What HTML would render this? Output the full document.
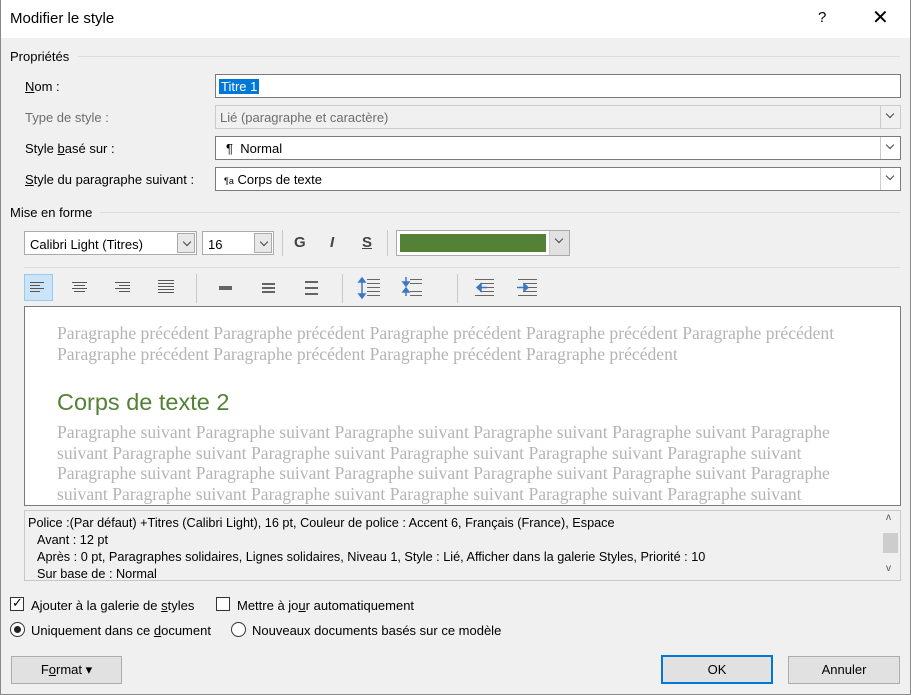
<!DOCTYPE html>
<html><head><meta charset="utf-8"><style>
*{box-sizing:border-box;margin:0;padding:0}
body{width:911px;height:695px;background:#f0f0f0;font-family:"Liberation Sans",sans-serif;font-size:13px;color:#000;position:relative;overflow:hidden}
.a{position:absolute;white-space:nowrap}
.box{position:absolute;background:#fff;border:1px solid #7a7a7a}
.dd{position:absolute;top:0;right:0;width:20px;height:100%;background:#fff;border-left:1px solid #ccc}
.dd:after{content:"";position:absolute;left:6px;top:5px;width:5px;height:5px;border-right:1px solid #444;border-bottom:1px solid #444;transform:rotate(45deg)}
.sep{position:absolute;height:1px;background:#dcdcdc}
.vs{position:absolute;width:1px;background:#c8c8c8}
.btn{position:absolute;background:#e1e1e1;border:1px solid #adadad;text-align:center;line-height:26px;font-size:13px}
.pv{font-family:"Liberation Serif",serif;font-size:17.6px;color:#b4b4b4;line-height:20.5px;white-space:nowrap}
u{text-decoration:underline}
.ic{position:absolute}
</style></head><body>
<div class="a" style="left:0;top:0;width:911px;height:38px;background:#fff"></div>
<div class="a" style="left:10px;top:10px;font-size:15px">Modifier le style</div>
<div class="a" style="left:818px;top:9px;font-size:15px">?</div>
<div class="a" style="left:872px;top:5px;font-size:20px;font-weight:300">✕</div>
<div class="a" style="left:0;top:0;width:1px;height:695px;background:#888"></div>
<div class="a" style="left:910px;top:0;width:1px;height:695px;background:#888"></div>
<div class="a" style="left:0;top:694px;width:911px;height:1px;background:#888"></div>

<div class="a" style="left:10px;top:49px">Propriétés</div>
<div class="sep" style="left:78px;top:56px;width:822px"></div>
<div class="a" style="left:25px;top:79px"><u>N</u>om :</div>
<div class="box" style="left:215px;top:74px;width:686px;height:24px"><span style="position:absolute;left:3px;top:4px;background:#0078d7;color:#fff;padding:0 2px">Titre 1</span></div>
<div class="a" style="left:25px;top:110px;color:#6d6d6d">Type de style :</div>
<div class="box" style="left:215px;top:105px;width:686px;height:24px;background:#f0f0f0;border-color:#ccc;color:#6d6d6d"><span style="position:absolute;left:4px;top:4px">Lié (paragraphe et caractère)</span><div class="dd" style="background:#f0f0f0"></div></div>
<div class="a" style="left:25px;top:141px">Style <u>b</u>asé sur :</div>
<div class="box" style="left:215px;top:136px;width:686px;height:24px"><span style="position:absolute;left:10px;top:4px">¶ &nbsp;Normal</span><div class="dd"></div></div>
<div class="a" style="left:25px;top:172px"><u>S</u>tyle du paragraphe suivant :</div>
<div class="box" style="left:215px;top:167px;width:686px;height:24px"><span style="position:absolute;left:8px;top:4px"><span style="font-size:9px">¶a</span> Corps de texte</span><div class="dd"></div></div>

<div class="a" style="left:10px;top:205px">Mise en forme</div>
<div class="sep" style="left:100px;top:212px;width:800px"></div>
<div class="box" style="left:24px;top:231px;width:173px;height:24px;border-color:#aaa"><span style="position:absolute;left:5px;top:5px">Calibri Light (Titres)</span><div class="dd" style="background:#e8e8e8;width:18px;top:1px;right:1px;height:20px;border:1px solid #aaa"></div></div>
<div class="box" style="left:202px;top:231px;width:72px;height:24px;border-color:#aaa"><span style="position:absolute;left:5px;top:5px">16</span><div class="dd" style="background:#e8e8e8;width:18px;top:1px;right:1px;height:20px;border:1px solid #aaa"></div></div>
<div class="vs" style="left:282px;top:230px;height:26px"></div>
<div class="a" style="left:294px;top:234px;font-weight:bold;font-size:15px;color:#444">G</div>
<div class="a" style="left:330px;top:234px;font-weight:bold;font-style:italic;font-size:15px;color:#444">I</div>
<div class="a" style="left:362px;top:234px;font-weight:bold;font-size:15px;color:#444;text-decoration:underline">S</div>
<div class="vs" style="left:387px;top:230px;height:26px"></div>
<div class="box" style="left:396px;top:230px;width:174px;height:26px;border-color:#aaa"><div style="position:absolute;left:3px;top:3px;width:146px;height:18px;background:#538135"></div><div class="dd" style="background:#e1e1e1;width:20px"></div></div>
<div class="sep" style="left:24px;top:267px;width:876px"></div>

<div class="a" style="left:24px;top:274px;width:29px;height:27px;background:#cce4f7;border:1px solid #99c9ef"></div>
<svg class="ic" style="left:0;top:270px" width="560" height="36">
<g stroke="#555" stroke-width="1">
<path d="M30 12.5h14M30 15.5h10M30 18.5h14M30 21.5h10"/>
<path d="M72 12.5h15M74 15.5h11M72 18.5h15M74 21.5h11"/>
<path d="M115 12.5h15M119 15.5h11M115 18.5h15M119 21.5h11"/>
<path d="M158 10.5h16M158 13.5h16M158 16.5h16M158 19.5h16M158 22.5h16"/>
</g>
<g stroke="#111" stroke-width="1.2">
<path d="M219 17h13M219 19h13"/>
<path d="M262 14h13M262 18h13M262 22h13"/>
<path d="M305 12h13M305 18h13M305 24h13"/>
</g>
<path d="M196.5 4v29M342.5 4v29M457.5 4v29" stroke="#c8c8c8"/>
<g stroke="#666"><path d="M367 9.5h13M367 13.5h13M367 17.5h13M367 21.5h13M367 25.5h13"/>
<path d="M410 9.5h12M410 13.5h12M410 21.5h12M410 25.5h12"/>
<path d="M475 9.5h19M480 13.5h14M480 17.5h14M480 21.5h14M475 25.5h19"/>
<path d="M518 9.5h19M523 13.5h14M523 17.5h14M523 21.5h14M518 25.5h19"/></g>
<g fill="#3b78c3" stroke="#3b78c3" stroke-width="1.5">
<path d="M362 10v16" fill="none"/><path d="M359 12l3-4 3 4zM359 24l3 4 3-4z"/>
<path d="M406 7v7M406 19v7" fill="none"/><path d="M403 12l3 4 3-4zM403 22l3-4 3 4z"/>
<path d="M478 17.5h9" fill="none"/><path d="M481 14l-4 3.5 4 3.5z"/>
<path d="M517 17.5h9" fill="none"/><path d="M524 14l4 3.5-4 3.5z"/>
</g>
</svg>

<div class="box" style="left:24px;top:306px;width:877px;height:200px;overflow:hidden">
<div class="pv" style="position:absolute;left:32px;top:16px">Paragraphe précédent Paragraphe précédent Paragraphe précédent Paragraphe précédent Paragraphe précédent<br>Paragraphe précédent Paragraphe précédent Paragraphe précédent Paragraphe précédent</div>
<div style="position:absolute;left:32px;top:82px;font-size:23.5px;color:#538135;font-family:'Liberation Sans',sans-serif">Corps de texte 2</div>
<div class="pv" style="position:absolute;left:32px;top:115px">Paragraphe suivant Paragraphe suivant Paragraphe suivant Paragraphe suivant Paragraphe suivant Paragraphe<br>suivant Paragraphe suivant Paragraphe suivant Paragraphe suivant Paragraphe suivant Paragraphe suivant<br>Paragraphe suivant Paragraphe suivant Paragraphe suivant Paragraphe suivant Paragraphe suivant Paragraphe<br>suivant Paragraphe suivant Paragraphe suivant Paragraphe suivant Paragraphe suivant Paragraphe suivant</div>
</div>

<div class="box" style="left:24px;top:510px;width:877px;height:71px;background:#f0f0f0;border-color:#c8c8c8;font-size:12.7px">
<div style="position:absolute;left:3px;top:4px;line-height:17px;white-space:nowrap">Police :(Par défaut) +Titres (Calibri Light), 16 pt, Couleur de police : Accent 6, Français (France), Espace<br><span style="padding-left:9px">Avant : 12 pt</span><br><span style="padding-left:9px">Après : 0 pt, Paragraphes solidaires, Lignes solidaires, Niveau 1, Style : Lié, Afficher dans la galerie Styles, Priorité : 10</span><br><span style="padding-left:9px">Sur base de : Normal</span></div>
<div style="position:absolute;right:0;top:0;width:19px;height:69px;background:#f0f0f0"><div style="position:absolute;left:2px;top:22px;width:15px;height:20px;background:#cdcdcd"></div><span style="position:absolute;left:5px;top:1px;font-size:10px;color:#555">ʌ</span><span style="position:absolute;left:5px;top:52px;font-size:10px;color:#555">v</span></div>
</div>

<div class="a" style="left:10px;top:597px;width:14px;height:14px;border:1px solid #333;background:#fff"><span style="position:absolute;left:1px;top:-3px;font-size:13px">✓</span></div>
<div class="a" style="left:31px;top:598px">Ajouter à la galerie de <u>s</u>tyles</div>
<div class="a" style="left:216px;top:597px;width:14px;height:14px;border:1px solid #333;background:#fff"></div>
<div class="a" style="left:237px;top:598px">Mettre à jo<u>u</u>r automatiquement</div>
<div class="a" style="left:10px;top:622px;width:15px;height:15px;border:1px solid #333;border-radius:50%;background:#fff"><div style="position:absolute;left:3px;top:3px;width:7px;height:7px;border-radius:50%;background:#222"></div></div>
<div class="a" style="left:31px;top:623px">Uniquement dans ce <u>d</u>ocument</div>
<div class="a" style="left:231px;top:622px;width:15px;height:15px;border:1px solid #333;border-radius:50%;background:#fff"></div>
<div class="a" style="left:252px;top:623px">Nouveaux documents basés sur ce modèle</div>

<div class="btn" style="left:11px;top:656px;width:111px;height:28px">F<u>o</u>rmat ▾</div>
<div class="btn" style="left:661px;top:655px;width:112px;height:29px;border:2px solid #0078d7;line-height:25px">OK</div>
<div class="btn" style="left:788px;top:656px;width:112px;height:28px">Annuler</div>
</body></html>
